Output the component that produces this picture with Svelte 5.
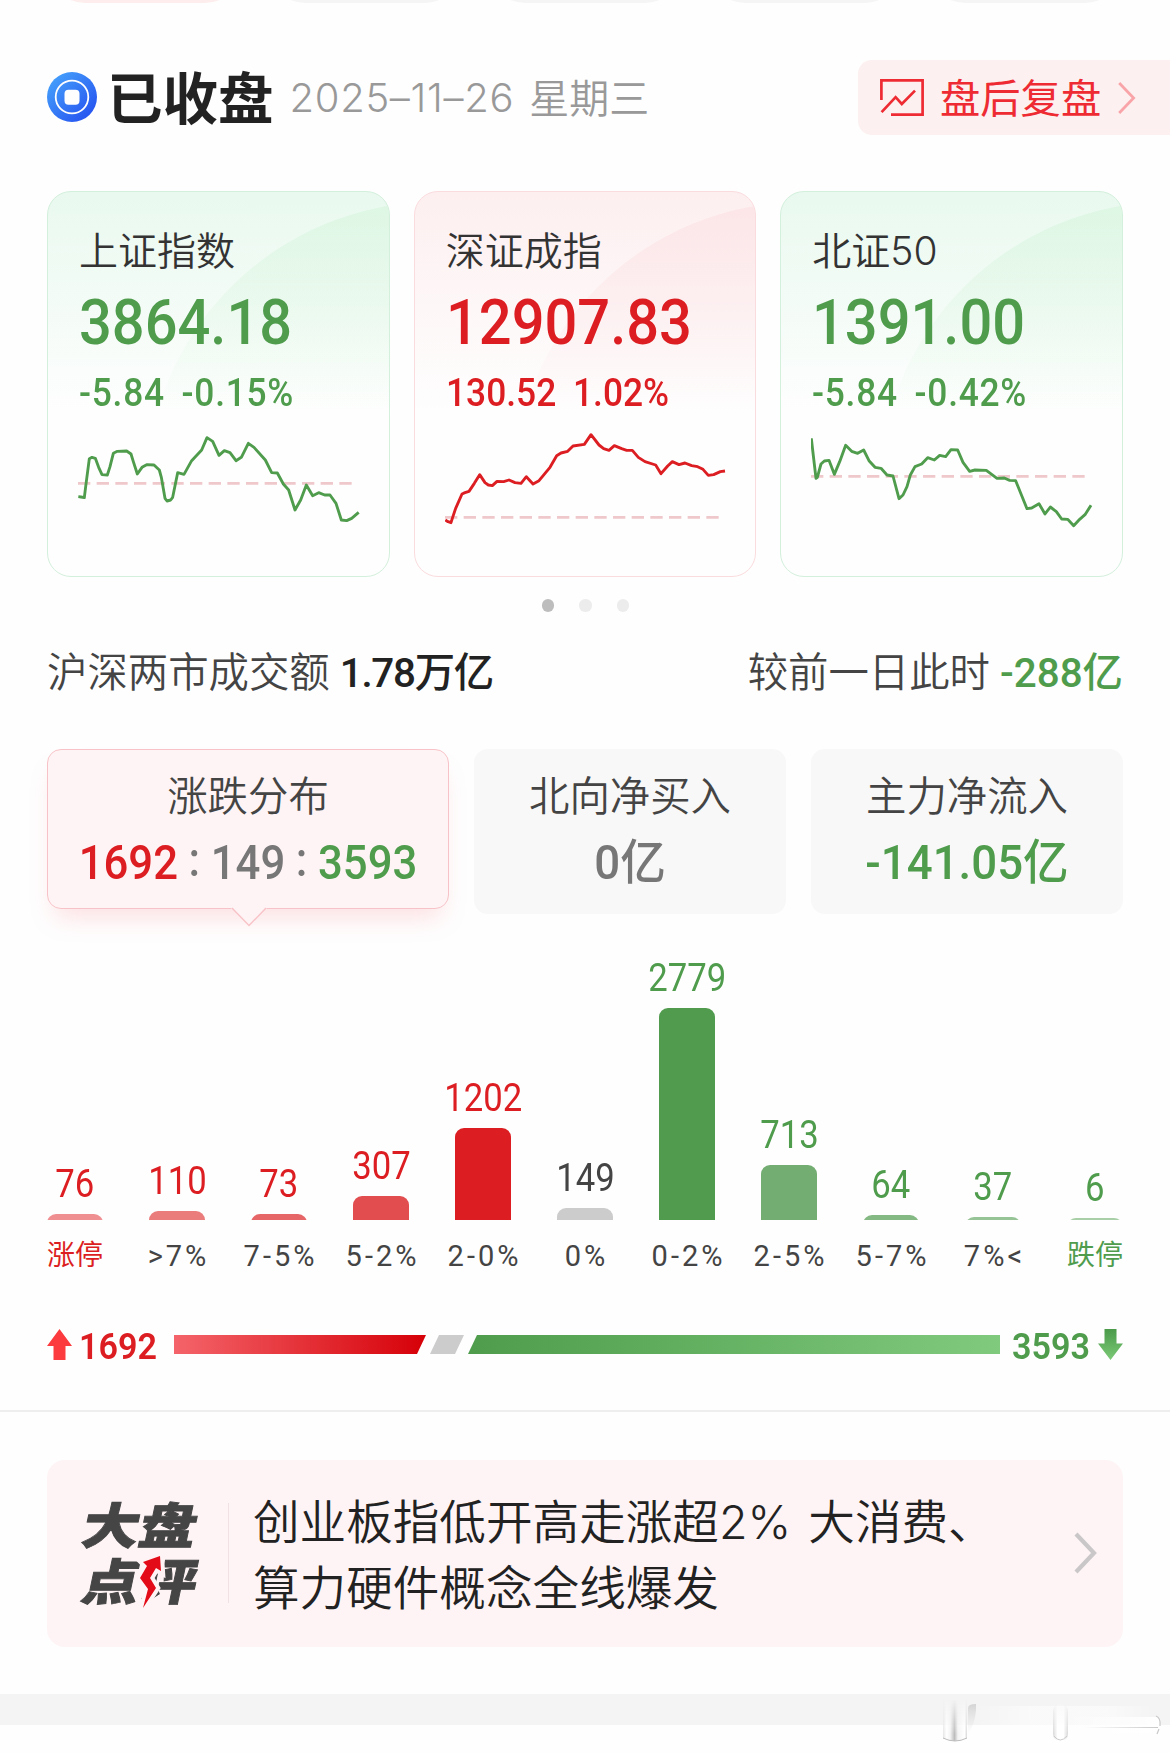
<script lang="ts">
    type Trend = 'up' | 'down' | 'flat';

    //#region <Data>
    const navPills = [true, false, false, false, false];

    const indexes = [
        {
            name: '上证指数', value: '3864.18', change: '-5.84', percent: '-0.15%', trend: 'down', base: 160,
            line: '1,200 9,201 19,203 23,170 34,86 42,82 52,85 62,112 72,134 88,135 96,110 106,70 118,64 146,63 159,72 166,95 178,132 192,112 206,104 228,105 244,120 250,142 261,205 267,213 278,210 284,202 299,128 318,133 341,92 371,60 387,23 404,34 423,76 439,62 456,68 474,92 490,82 511,40 528,52 562,90 581,128 598,129 616,162 632,180 651,240 668,210 685,165 704,197 722,188 740,195 756,195 774,220 790,270 806,272 821,265 842,247',
        },
        {
            name: '深证成指', value: '12907.83', change: '130.52', percent: '1.02%', trend: 'up', base: 262,
            line: '1,270 9,275 18,278 22,265 32,235 51,192 60,188 72,184 88,160 104,134 120,158 130,165 142,167 156,154 176,155 192,150 210,158 228,160 244,140 264,162 282,152 315,112 335,77 348,69 368,64 384,48 418,43 438,14 462,45 476,56 492,61 508,47 530,56 545,61 562,61 580,82 600,95 632,105 648,131 668,108 682,95 702,104 720,99 740,107 758,110 774,118 790,136 806,134 826,125 840,123',
        },
        {
            name: '北证50', value: '1391.00', change: '-5.84', percent: '-0.42%', trend: 'down', base: 139,
            line: '1,25 5,60 15,145 19,142 30,102 40,93 54,91 70,133 86,95 104,46 122,64 140,70 158,60 174,92 192,112 210,115 228,135 246,138 264,206 276,195 288,170 298,135 312,110 332,102 350,83 370,90 386,76 404,80 420,59 440,60 456,97 476,124 492,120 526,121 558,145 580,144 596,151 614,152 648,236 662,234 684,221 702,252 718,231 736,245 752,267 770,268 788,287 806,268 822,254 840,226',
        },
    ];

    const distribution: { label: string; count: number; height: number; color: string; trend: Trend }[] = [
        { label: '涨停', count: 76, height: 6, color: '#f08f92', trend: 'up' },
        { label: '>7%', count: 110, height: 9, color: '#eb7c7c', trend: 'up' },
        { label: '7-5%', count: 73, height: 6, color: '#e66668', trend: 'up' },
        { label: '5-2%', count: 307, height: 24, color: '#e24d4f', trend: 'up' },
        { label: '2-0%', count: 1202, height: 92, color: '#dc1e22', trend: 'up' },
        { label: '0%', count: 149, height: 12, color: '#cccccc', trend: 'flat' },
        { label: '0-2%', count: 2779, height: 212, color: '#509b4e', trend: 'down' },
        { label: '2-5%', count: 713, height: 55, color: '#73ad72', trend: 'down' },
        { label: '5-7%', count: 64, height: 5, color: '#85b984', trend: 'down' },
        { label: '7%<', count: 37, height: 3, color: '#97c496', trend: 'down' },
        { label: '跌停', count: 6, height: 2, color: '#a9cfa8', trend: 'down' },
    ];
    //#endregion </Data>
</script>


<!-- ######################################## -->
<!-- Render  -->
<!-- ######################################## -->
<div class="page">
    <nav class="pills">
        {#each navPills as active}
            <span class="pill" class:active></span>
        {/each}
    </nav>

    <header class="header">
        <svg class="coin" viewBox="0 0 50 50">
            <defs>
                <linearGradient id="coin" x1="0" y1="0" x2="1" y2="1">
                    <stop offset="0.1" stop-color="#45a0fb" />
                    <stop offset="0.9" stop-color="#2552f0" />
                </linearGradient>
            </defs>
            <circle cx="25" cy="25" r="25" fill="url(#coin)" />
            <circle cx="25" cy="25" r="16.3" fill="none" stroke="#fff" stroke-width="1.8" />
            <rect x="17.5" y="17.7" width="15" height="15" rx="4" fill="#fff" />
        </svg>
        <h1>已收盘</h1>
        <span class="date">2025–11–26</span>
        <span class="weekday">星期三</span>
        <button class="review">
            <svg class="review-icon" viewBox="0 0 44 38" fill="none" stroke="currentColor" stroke-width="2.7">
                <path d="M1.4 21V1.4H42.6V35.6H11" />
                <path d="M1.6 33.2L15.6 18.2L21.8 25L35 11.6" />
            </svg>
            <span>盘后复盘</span>
            <svg class="review-arrow" viewBox="0 0 18 34" fill="none" stroke="#f9a4a8" stroke-width="2.8">
                <path d="M1.2 2L15.6 17L1.2 32" />
            </svg>
        </button>
    </header>

    <section class="cards">
        {#each indexes as item}
            <article class="card {item.trend}">
                <h2>{item.name}</h2>
                <div class="value">{item.value}</div>
                <div class="change">
                    <span>{item.change}</span>
                    <span>{item.percent}</span>
                </div>
                <svg class="spark" viewBox="0 0 846 300" fill="none">
                    <path d="M0 {item.base}H826" stroke="#efc8cb" stroke-width="8" stroke-dasharray="37 19" />
                    <polyline points={item.line} stroke="currentColor" stroke-width="8.6" stroke-linejoin="round" />
                </svg>
            </article>
        {/each}
    </section>

    <div class="dots">
        <i class="current"></i><i></i><i></i>
    </div>

    <section class="turnover">
        <span>沪深两市成交额</span>
        <b class="total">1.78万亿</b>
        <span class="compare">较前一日此时</span>
        <b class="down">-288亿</b>
    </section>

    <section class="tabs">
        <div class="tab selected">
            <h3>涨跌分布</h3>
            <p class="ratio">
                <span class="up">1692</span><i>:</i><span>149</span><i>:</i><span class="down">3593</span>
            </p>
            <svg class="pointer" viewBox="0 0 36 20">
                <path d="M0 0H36V1.6L34 1.6L18 18.4L2 1.6H0Z" fill="#fef4f5" />
                <path d="M1 1L18 18.6L35 1" fill="none" stroke="#f8c3c8" stroke-width="1.4" />
            </svg>
        </div>
        <div class="tab">
            <h3>北向净买入</h3>
            <p>0亿</p>
        </div>
        <div class="tab">
            <h3>主力净流入</h3>
            <p class="down">-141.05亿</p>
        </div>
    </section>

    <section class="chart">
        {#each distribution as bin}
            <div class="column {bin.trend}">
                <span class="count">{bin.count}</span>
                <div class="bar" style:height="{bin.height}px">
                    <div class="fill" style:background={bin.color}></div>
                </div>
                <span class="label" class:limit={bin.label.endsWith('停')}>{bin.label}</span>
            </div>
        {/each}
    </section>

    <section class="balance">
        <svg class="arrow" viewBox="0 0 25 31">
            <path d="M12.5 0L25 17H18.5V31H6.5V17H0Z" fill="#fb3b3d" />
        </svg>
        <b class="up">1692</b>
        <div class="track">
            <div class="rise"></div>
            <div class="even"></div>
            <div class="fall"></div>
        </div>
        <b class="down">3593</b>
        <svg class="arrow" viewBox="0 0 25 31">
            <defs>
                <linearGradient id="fall" x1="0" y1="0" x2="0" y2="1">
                    <stop offset="0" stop-color="#4a9a49" />
                    <stop offset="1" stop-color="#7cca78" />
                </linearGradient>
            </defs>
            <path d="M12.5 31L25 14.5H18.5V0H6.5V14.5H0Z" fill="url(#fall)" />
        </svg>
    </section>

    <hr>

    <section class="comment">
        <div class="logo">
            <span>大盘</span>
            <span>点评</span>
            <svg class="bolt" viewBox="0 0 24 52">
                <path d="M20 0L3 6L7 10L0 22L8 33L3 52L16 32L10 22L16 12L21 15Z" />
            </svg>
        </div>
        <p>创业板指低开高走涨超2% 大消费、<br>算力硬件概念全线爆发</p>
        <svg class="more" viewBox="0 0 24 42" fill="none" stroke="#c9c7c8" stroke-width="4.2">
            <path d="M2 2L20 21L2 40" />
        </svg>
    </section>

    <footer>
        <!-- translucent glass strokes at the right edge -->
        <svg class="glass" viewBox="0 0 236 54">
            <defs>
                <linearGradient id="haze" x1="0" y1="0" x2="1" y2="0">
                    <stop offset="0" stop-color="#fff" stop-opacity="0" />
                    <stop offset="0.3" stop-color="#fff" stop-opacity="0.5" />
                    <stop offset="0.75" stop-color="#fff" stop-opacity="0.5" />
                    <stop offset="1" stop-color="#fff" stop-opacity="0" />
                </linearGradient>
                <linearGradient id="tube" x1="0" y1="0" x2="1" y2="0">
                    <stop offset="0" stop-color="#e6e6e6" />
                    <stop offset="0.15" stop-color="#fff" />
                    <stop offset="0.3" stop-color="#f4f4f4" />
                    <stop offset="0.48" stop-color="#bdbdbd" />
                    <stop offset="0.62" stop-color="#f4f4f4" />
                    <stop offset="0.9" stop-color="#fff" />
                    <stop offset="1" stop-color="#d8d8d8" />
                </linearGradient>
                <linearGradient id="thin" x1="0" y1="0" x2="1" y2="0">
                    <stop offset="0" stop-color="#d8d8d8" />
                    <stop offset="0.3" stop-color="#fff" />
                    <stop offset="0.7" stop-color="#fff" />
                    <stop offset="1" stop-color="#d8d8d8" />
                </linearGradient>
                <linearGradient id="side" x1="0" y1="0" x2="1" y2="0">
                    <stop offset="0" stop-color="#fff" stop-opacity="0" />
                    <stop offset="1" stop-color="#fff" />
                </linearGradient>
                <linearGradient id="shade" x1="0" y1="0" x2="0" y2="1">
                    <stop offset="0" stop-color="#d4d4d4" />
                    <stop offset="1" stop-color="#e8e8e8" stop-opacity="0" />
                </linearGradient>
                <linearGradient id="edge" x1="0" y1="0" x2="1" y2="0">
                    <stop offset="0" stop-color="#d2d2d2" stop-opacity="0" />
                    <stop offset="1" stop-color="#c8c8c8" />
                </linearGradient>
                <linearGradient id="fade" x1="0" y1="0" x2="0" y2="1">
                    <stop offset="0.1" stop-color="#000" />
                    <stop offset="0.8" stop-color="#fff" />
                </linearGradient>
                <mask id="fademask"><rect width="236" height="50" fill="url(#fade)" /></mask>
            </defs>
            <rect x="40" y="12" width="180" height="19" fill="url(#haze)" />
            <path d="M34 14Q34 10 42 10V16Q41 30 34 40Z" fill="url(#shade)" />
            <g mask="url(#fademask)">
                <path d="M9 6H33V44Q21 50 9 44Z" fill="url(#tube)" />
                <path d="M9 44Q21 50 33 44" fill="none" stroke="#bbb" stroke-width="1" />
                <rect x="119" y="10" width="15" height="37" rx="7" fill="url(#thin)" />
                <path d="M120 42Q126 50 133 42" fill="none" stroke="#ccc" stroke-width="1" />
            </g>
            <rect x="130" y="23" width="96" height="10" rx="4" fill="url(#side)" />
            <rect x="130" y="34" width="96" height="5" rx="2" fill="url(#side)" />
            <rect x="150" y="33" width="74" height="1" fill="url(#edge)" />
            <path d="M222 22Q227 24 226 32M225 35L223 40" fill="none" stroke="#c8c8c8" stroke-width="1.2" />
        </svg>
    </footer>
</div>

<style>
    :global(body) {
        margin: 0;
        background: #fefefe;
    }

    .page {
        display: flex;
        flex-direction: column;
        width: 1170px;
        height: 1753px;
        overflow: hidden;
        background: #fefefe;
        color: #444;
        font-family: Roboto, "Noto Sans CJK SC", sans-serif;
    }

    h1, h2, h3, p {
        margin: 0;
        font-weight: 400;
    }

    b {
        font-weight: 500;
    }

    .up {
        color: #dc1e22;
    }

    .down {
        color: #4f9c4d;
    }

    .pills {
        display: flex;
        align-items: flex-end;
        gap: 24px;
        height: 3px;
        padding-left: 47px;
    }

    .pill {
        flex: none;
        width: 196px;
        height: 80px;
        border-radius: 38px;
        background: #f5f5f5;
    }

    .pill.active {
        background: #fdeeed;
    }

    /* header */
    .header {
        display: flex;
        align-items: center;
        height: 75px;
        margin-top: 57px;
        padding-left: 47px;
    }

    .coin {
        width: 50px;
        height: 50px;
        margin-bottom: 1px;
    }

    h1 {
        margin: 0 0 5px 10px;
        color: #222;
        font-family: "Noto Sans CJK SC", sans-serif;
        font-size: 55.5px;
        font-weight: 700;
        line-height: 70px;
    }

    .date {
        margin-left: 16px;
        color: #999;
        font-family: Inter, sans-serif;
        font-size: 40px;
        font-weight: 350;
        letter-spacing: 0.7px;
    }

    .weekday {
        margin: 0 0 4px 15px;
        color: #999;
        font-family: "Noto Sans CJK SC", sans-serif;
        font-size: 40px;
        font-weight: 350;
    }

    .review {
        display: flex;
        align-items: center;
        width: 312px;
        height: 75px;
        margin-left: auto;
        padding: 0 0 0 22px;
        border: 0;
        border-radius: 14px 0 0 14px;
        background: #fcf1f0;
        color: #ee2b33;
        font-family: "Noto Sans CJK SC", sans-serif;
        font-size: 40.3px;
    }

    .review span {
        padding-bottom: 4px;
    }

    .review-icon {
        width: 44px;
        height: 38px;
        margin-right: 16px;
    }

    .review-arrow {
        width: 18px;
        height: 34px;
        margin-left: 17px;
    }

    /* index cards */
    .cards {
        display: flex;
        gap: 24px;
        margin: 56px 47px 0;
    }

    .card {
        position: relative;
        flex: 1;
        box-sizing: border-box;
        height: 386px;
        padding: 32px 0 0 31px;
        overflow: hidden;
        border: 1.5px solid #d3f0dc;
        border-radius: 24px;
        background: linear-gradient(#e9f9ef, #fefefe 58%);
    }

    .card.up {
        border-color: #fbdcde;
        background: linear-gradient(#fdeff0, #fefefe 58%);
    }

    .card::before {
        content: '';
        position: absolute;
        top: 10px;
        left: 98px;
        width: 580px;
        height: 580px;
        border-radius: 50%;
        background: linear-gradient(rgba(212, 244, 218, 0.55), rgba(240, 251, 243, 0) 36%);
    }

    .card.up::before {
        background: linear-gradient(rgba(251, 219, 222, 0.5), rgba(254, 240, 241, 0) 36%);
    }

    .card > * {
        position: relative;
    }

    h2 {
        color: #333;
        font-family: Inter, "Noto Sans CJK SC", sans-serif;
        font-size: 39px;
        font-weight: 350;
        line-height: 54px;
    }

    /* Roboto is condensed a little for the tall narrow figures */
    .value {
        margin-top: 11px;
        font-size: 63.5px;
        font-weight: 500;
        line-height: 68px;
        transform: scaleX(0.91);
        transform-origin: left;
    }

    .change {
        display: flex;
        gap: 18px;
        margin-top: 16px;
        font-size: 38px;
        font-weight: 500;
        line-height: 40px;
        transform: scaleX(0.93);
        transform-origin: left;
    }

    .down .change {
        letter-spacing: 0.8px;
    }

    .spark {
        display: block;
        width: 282px;
        height: 100px;
        margin: 17px 0 0 -1px;
    }

    .dots {
        display: flex;
        justify-content: center;
        gap: 25px;
        margin-top: 22px;
        padding-left: 1px;
    }

    .dots i {
        width: 12.5px;
        height: 12.5px;
        border-radius: 50%;
        background: #ececec;
    }

    .dots .current {
        background: #bdbdbd;
    }

    /* turnover */
    .turnover {
        display: flex;
        align-items: baseline;
        height: 60px;
        margin: 32px 47px 0;
        font-size: 40.4px;
        font-weight: 350;
        line-height: 60px;
    }

    .turnover b {
        margin-left: 10px;
    }

    .turnover .total {
        color: #222;
        letter-spacing: -1.3px;
    }

    .compare {
        margin-left: auto;
    }

    /* tabs */
    .tabs {
        display: flex;
        align-items: flex-start;
        gap: 25px;
        margin: 45px 47px 0;
    }

    .tab {
        flex: 1;
        box-sizing: border-box;
        height: 165px;
        padding-top: 17px;
        border-radius: 14px;
        background: #f8f8f8;
        text-align: center;
    }

    .tab.selected {
        position: relative;
        flex: none;
        width: 402px;
        height: 160px;
        padding-top: 16.5px;
        border: 1.5px solid #f8c3c8;
        background: #fef4f5;
        box-shadow: 0 16px 24px -8px rgba(250, 130, 140, 0.25);
    }

    h3 {
        font-family: "Noto Sans CJK SC", sans-serif;
        font-size: 40.4px;
        font-weight: 350;
        line-height: 56px;
    }

    .tab p {
        margin-top: 13px;
        color: #777;
        font-size: 48px;
        font-weight: 500;
        line-height: 56px;
        transform: scaleX(0.95);
    }

    .tab p.down {
        color: #4f9c4d;
    }

    .tab p.ratio {
        transform: scaleX(0.91);
    }

    .ratio i {
        position: relative;
        top: -3px;
        display: inline-block;
        width: 36px;
        font-style: normal;
    }

    .pointer {
        position: absolute;
        bottom: -19px;
        left: 183px;
        width: 36px;
        height: 20px;
    }

    /* distribution chart */
    .chart {
        display: flex;
        align-items: flex-end;
        justify-content: space-between;
        height: 330px;
        margin: 32px 47px 0;
    }

    .column {
        display: flex;
        flex-direction: column;
        align-items: center;
        width: 56px;
        white-space: nowrap;
    }

    .count {
        margin-bottom: 11px;
        font-size: 38.5px;
        line-height: 38px;
        transform: scaleX(0.9);
    }

    .bar {
        width: 56px;
        overflow: hidden;
    }

    .fill {
        height: 100%;
        min-height: 12px;
        border-radius: 9px 9px 0 0;
    }

    .label {
        margin: 16px -3px 0 0;
        color: #444;
        font-size: 29px;
        letter-spacing: 3px;
        line-height: 40px;
    }

    .label.limit {
        margin-right: 0;
        color: inherit;
        font-size: 28px;
        letter-spacing: 0;
    }

    /* rise / fall balance */
    .balance {
        display: flex;
        align-items: center;
        height: 40px;
        margin: 49px 47px 0;
        font-size: 37.5px;
        line-height: 40px;
    }

    .balance b {
        padding-top: 2px;
        font-weight: 600;
        transform: scaleX(0.91);
        transform-origin: left;
    }

    .arrow {
        width: 25px;
        height: 31px;
    }

    .balance b.up {
        width: 78px;
        margin: 0 17px 0 7px;
    }

    .balance b.down {
        width: 77px;
        margin: 0 9px 0 12px;
    }

    .track {
        display: flex;
        flex: 1;
        height: 19px;
    }

    .rise {
        width: 252px;
        background: linear-gradient(90deg, #f4646a, #d60008);
        clip-path: polygon(0 0, 100% 0, calc(100% - 9px) 100%, 0 100%);
    }

    .even {
        width: 34px;
        margin: 0 4px;
        background: #ccc;
        clip-path: polygon(9px 0, 100% 0, calc(100% - 9px) 100%, 0 100%);
    }

    .fall {
        flex: 1;
        background: linear-gradient(90deg, #4e9c4c, #80ca7d);
        clip-path: polygon(9px 0, 100% 0, 100% 100%, 0 100%);
    }

    hr {
        width: 100%;
        height: 2px;
        margin: 45px 0 0;
        border: 0;
        background: #eee;
    }

    /* comment */
    .comment {
        display: flex;
        align-items: center;
        box-sizing: border-box;
        height: 187px;
        margin: 48px 47px 0;
        padding: 0 25px 0 33px;
        border-radius: 18px;
        background: #fef4f5;
    }

    .logo {
        position: relative;
        display: flex;
        flex-direction: column;
        width: 148px;
        height: 100px;
        border-right: 1.5px solid #f0e2e3;
        color: #454545;
        font-family: "Noto Sans CJK SC", sans-serif;
        font-size: 57px;
        font-weight: 900;
        line-height: 56px;
        -webkit-text-stroke: 1px #454545;
    }

    .logo span {
        height: 56px;
        transform: translate(4px, -9px) skewX(-12deg) scaleY(0.86);
        white-space: nowrap;
    }

    .bolt {
        position: absolute;
        top: 53px;
        left: 60px;
        width: 24px;
        height: 52px;
        overflow: visible;
        fill: #e30b17;
        stroke: #fef4f5;
        stroke-width: 8px;
        paint-order: stroke;
    }

    .comment p {
        flex: 1;
        margin: 5px 0 0 24px;
        color: #222;
        font-family: Inter, "Noto Sans CJK SC", sans-serif;
        font-size: 46.6px;
        font-weight: 350;
        line-height: 65.5px;
        white-space: nowrap;
        word-spacing: 4px;
    }

    .more {
        width: 24px;
        height: 42px;
    }

    footer {
        position: relative;
        height: 31px;
        margin-top: 47px;
        background: #f4f4f4;
    }

    .glass {
        position: absolute;
        top: 0;
        right: 0;
        width: 236px;
        height: 54px;
    }
</style>
